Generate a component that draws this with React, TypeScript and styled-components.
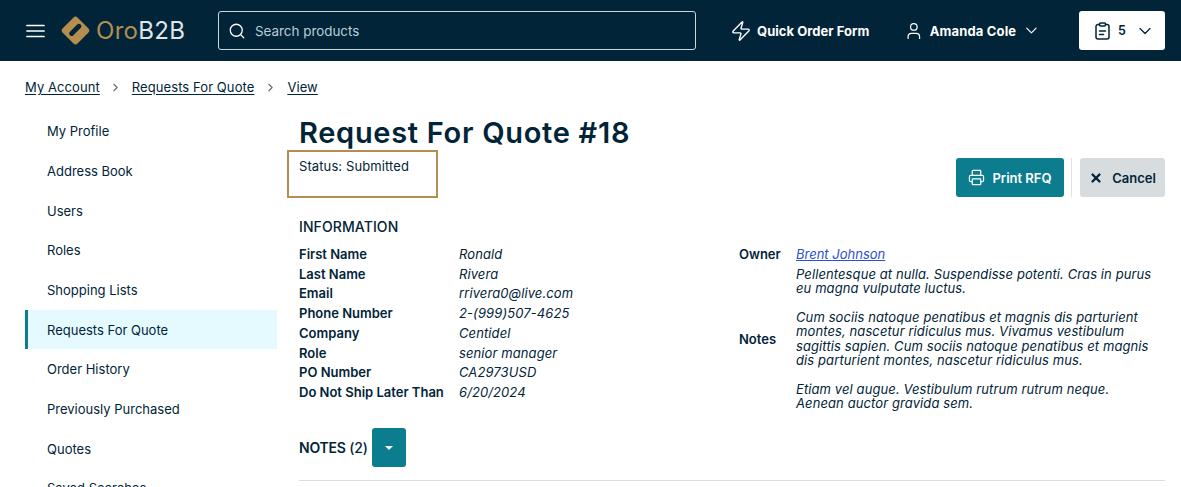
import React from "react";
import styled, { createGlobalStyle } from "styled-components";
import { Search, Zap, User, ChevronDown, Printer, X, ChevronRight } from "lucide-react";

const Global = createGlobalStyle`
  html, body { margin: 0; padding: 0; background: #fff; height: 487px; overflow: hidden; }
  body { font-family: Inter, "Open Sans", "Liberation Sans", sans-serif; color: #012438; }
  * { box-sizing: border-box; }
`;
const Page = styled.div`width: 1181px; height: 487px; overflow: hidden;`;
const Header = styled.header`
  height: 61px; background: #012438; display: flex; align-items: center; padding: 0 16px 0 26px;
`;
const IconBtn = styled.span`display: inline-flex; color: #fff;`;
const Logo = styled.div`display: flex; align-items: center; margin-left: 16px; width: 157px; gap: 6px;`;
const LogoText = styled.span`font-size: 24px; color: #b38e4f; letter-spacing: 0.3px; font-weight: 400; b { font-weight: 400; color: #dfe6ea; }`;
const SearchBox = styled.div`
  width: 478px; height: 39px; border: 1px solid #cfd6da; border-radius: 3px; display: flex; align-items: center;
  padding-left: 9px; gap: 9px; color: #fff;
`;
const Placeholder = styled.span`font-size: 13.4px; color: #b9cdd8;`;
const HeaderLink = styled.div<{ $w: number }>`
  display: flex; align-items: center; color: #fff; font-size: 13px; font-weight: 700; width: ${p => p.$w}px; flex: none;
`;
const QuickWrap = styled.div`margin-left: 34px;`;
const QuickText = styled.span`margin-left: 5px; letter-spacing: 0.04px; white-space: nowrap;`;
const UserName = styled.span`margin: 0 6px; width: 88px; letter-spacing: 0.15px; white-space: nowrap;`;
const Cart = styled.div`
  margin-left: 38px; width: 86px; height: 39px; background: #fff; border-radius: 3px; color: #012438; flex: none;
  display: flex; align-items: center; padding-left: 16px; gap: 8px; font-size: 12.5px; font-weight: 600;
`;
const CartChevron = styled.span`display: inline-flex; margin-left: 1px;`;
const Crumbs = styled.nav`
  height: 50px; padding: 2px 0 0 25px; display: flex; align-items: center; font-size: 13px;
`;
const Crumb = styled.a`color: #012438; text-decoration: underline; text-underline-offset: 2px; letter-spacing: 0.08px;`;
const Sep = styled.span<{ $w: number }>`display: inline-flex; justify-content: center; width: ${p => p.$w}px; color: #5a6b75;`;
const Body = styled.div`display: flex; padding-left: 25px; padding-right: 16px;`;
const Side = styled.aside`width: 252px; flex: none; margin-right: 22px; padding-top: 0.3px;`;
const SideItem = styled.div<{ $active?: boolean }>`
  height: 39.7px; display: flex; align-items: center; padding-left: ${p => (p.$active ? 19 : 22)}px; font-size: 13px; color: #012438;
  background: ${p => (p.$active ? "#e5faff" : "transparent")};
  border-left: ${p => (p.$active ? "3px solid #0b7d8e" : "none")};
`;
const Main = styled.main`flex: 1; min-width: 0;`;
const Title = styled.h1`margin: 0; padding-top: 4px; font-size: 29px; line-height: 36px; font-weight: 600; color: #012438; letter-spacing: 0.7px;`;
const TopRow = styled.div`display: flex; justify-content: space-between; align-items: flex-start;`;
const StatusBox = styled.div`
  margin-left: -12px; margin-top: -1px; width: 151px; height: 48px; border: 2px solid #b38e4f; padding: 5px 0 0 10px; font-size: 13px; line-height: 18px;
  letter-spacing: 0.1px; font-weight: 400;
`;
const Actions = styled.div`display: flex; align-items: center; margin-top: 7px;`;
const Btn = styled.button<{ $primary?: boolean; $w: number }>`
  width: ${p => p.$w}px; height: 39px; border: 0; border-radius: 3px; display: flex; align-items: center; justify-content: center; gap: ${p => (p.$primary ? 7 : 9)}px;
  font: 600 13px Inter, sans-serif; padding: 0;
  background: ${p => (p.$primary ? "#0b7d8e" : "#d7dcde")};
  color: ${p => (p.$primary ? "#fff" : "#012438")};
`;
const Divider = styled.span`width: 1px; height: 39px; background: #dfe2e4; margin: 0 8px 0 7px;`;
const Section = styled.h2`margin: 19px 0 0; font-size: 14px; line-height: 20px; font-weight: 500; color: #012438; letter-spacing: 0.1px;`;
const Columns = styled.div`display: flex; margin-top: 7px;`;
const Info = styled.dl`
  margin: 0; width: 440px; display: grid; grid-template-columns: 160px 1fr; grid-auto-rows: 19.75px; align-items: center; font-size: 13px;
`;
const Label = styled.dt`font-weight: 600; font-size: 13px;`;
const TopLabel = styled(Label)`align-self: start; line-height: 20px;`;
const Value = styled.dd`margin: 0; font-style: italic; letter-spacing: 0.1px;`;
const Right = styled.div`flex: 1; display: grid; grid-template-columns: 57px 1fr; grid-template-rows: 23px auto; font-size: 13px; align-items: center;`;
const OwnerLink = styled.a`color: #2b4fd0; text-decoration: underline; font-style: italic; line-height: 20px; align-self: start;`;
const NotesText = styled.div`font-style: italic; line-height: 14.3px; letter-spacing: 0.1px; p { margin: 0 0 14.4px; } p:last-child { margin: 0; }`;
const NotesRow = styled.div`display: flex; align-items: center; gap: 4px; margin-top: 18px;`;
const NotesTitle = styled.span`font-size: 14px; line-height: 20px; font-weight: 500; b { font-weight: 600; } letter-spacing: -0.2px;`;
const Toggle = styled.button`
  width: 34px; height: 39px; border: 0; border-radius: 3px; background: #0b7d8e; display: flex; align-items: center; justify-content: center; padding: 0;
`;
const Caret = styled.span`width: 0; height: 0; border-left: 4px solid transparent; border-right: 4px solid transparent; border-top: 4px solid #fff;`;
const Rule = styled.hr`margin: 13px 0 0; border: 0; border-top: 1px solid #d7dcde;`;

const sideItems = ["My Profile", "Address Book", "Users", "Roles", "Shopping Lists", "Requests For Quote", "Order History", "Previously Purchased", "Quotes", "Saved Searches"];
const info = [
  ["First Name", "Ronald"], ["Last Name", "Rivera"], ["Email", "rrivera0@live.com"], ["Phone Number", "2-(999)507-4625"],
  ["Company", "Centidel"], ["Role", "senior manager"], ["PO Number", "CA2973USD"], ["Do Not Ship Later Than", "6/20/2024"],
];

export default function App() {
  return (
    <Page>
      <Global />
      <Header>
        <IconBtn>
          <svg width="19" height="14" viewBox="0 0 19 14" stroke="currentColor" strokeWidth="1.7" strokeLinecap="round">
            <path d="M1 1.5h17M1 7h17M1 12.5h17" />
          </svg>
        </IconBtn>
        <Logo>
          <svg width="29" height="29" viewBox="0 0 29 29">
            <path fillRule="evenodd" fill="#b38e4f" d="M12.5 1.5a3 3 0 0 1 4 0l11 11a3 3 0 0 1 0 4l-11 11a3 3 0 0 1-4 0l-11-11a3 3 0 0 1 0-4ZM16.2 8.6 9 15.8a2.4 2.4 0 0 0 3.4 3.4l7.2-7.2a2.4 2.4 0 0 0-3.4-3.4Z" />
          </svg>
          <LogoText>Oro<b>B2B</b></LogoText>
        </Logo>
        <SearchBox>
          <Search size={18} strokeWidth={1.7} />
          <Placeholder>Search products</Placeholder>
        </SearchBox>
        <QuickWrap>
          <HeaderLink $w={174}><Zap size={22} strokeWidth={1.5} /><QuickText>Quick Order Form</QuickText></HeaderLink>
        </QuickWrap>
        <HeaderLink $w={137}>
          <User size={22} strokeWidth={1.5} />
          <UserName>Amanda Cole</UserName>
          <ChevronDown size={21} strokeWidth={1.5} />
        </HeaderLink>
        <Cart>
          <svg width="15" height="18" viewBox="0 0 15 18" fill="none" stroke="currentColor" strokeWidth="1.5" strokeLinecap="round" strokeLinejoin="round">
            <path d="M4.5 2.5H3A2 2 0 0 0 1 4.500V15a2 2 0 0 0 2 2h9a2 2 0 0 0 2-2V4.500a2 2 0 0 0-2-2h-1.500" />
            <rect x="4.500" y="1" width="6" height="3" rx="1" />
            <path d="M4.500 9h6M4.500 12.500h4" />
          </svg>
          5
          <CartChevron><ChevronDown size={20} strokeWidth={1.5} /></CartChevron>
        </Cart>
      </Header>
      <Crumbs>
        <Crumb>My Account</Crumb>
        <Sep $w={32}><ChevronRight size={13} /></Sep>
        <Crumb>Requests For Quote</Crumb>
        <Sep $w={33}><ChevronRight size={13} /></Sep>
        <Crumb>View</Crumb>
      </Crumbs>
      <Body>
        <Side>
          {sideItems.map(s => <SideItem key={s} $active={s === "Requests For Quote"}>{s}</SideItem>)}
        </Side>
        <Main>
          <Title>Request For Quote #18</Title>
          <TopRow>
            <StatusBox>Status: Submitted</StatusBox>
            <Actions>
              <Btn $primary $w={108}><Printer size={17} strokeWidth={1.7} />Print RFQ</Btn>
              <Divider />
              <Btn $w={85}><X size={14} strokeWidth={4} />Cancel</Btn>
            </Actions>
          </TopRow>
          <Section>INFORMATION</Section>
          <Columns>
            <Info>
              {info.map(([k, v]) => (
                <React.Fragment key={k}><Label>{k}</Label><Value>{v}</Value></React.Fragment>
              ))}
            </Info>
            <Right>
              <TopLabel>Owner</TopLabel>
              <OwnerLink>Brent Johnson</OwnerLink>
              <Label>Notes</Label>
              <NotesText>
                <p>Pellentesque at nulla. Suspendisse potenti. Cras in purus<br />eu magna vulputate luctus.</p>
                <p>Cum sociis natoque penatibus et magnis dis parturient<br />montes, nascetur ridiculus mus. Vivamus vestibulum<br />sagittis sapien. Cum sociis natoque penatibus et magnis<br />dis parturient montes, nascetur ridiculus mus.</p>
                <p>Etiam vel augue. Vestibulum rutrum rutrum neque.<br />Aenean auctor gravida sem.</p>
              </NotesText>
            </Right>
          </Columns>
          <NotesRow>
            <NotesTitle><b>NOTES</b> (2)</NotesTitle>
            <Toggle><Caret /></Toggle>
          </NotesRow>
          <Rule />
        </Main>
      </Body>
    </Page>
  );
}
